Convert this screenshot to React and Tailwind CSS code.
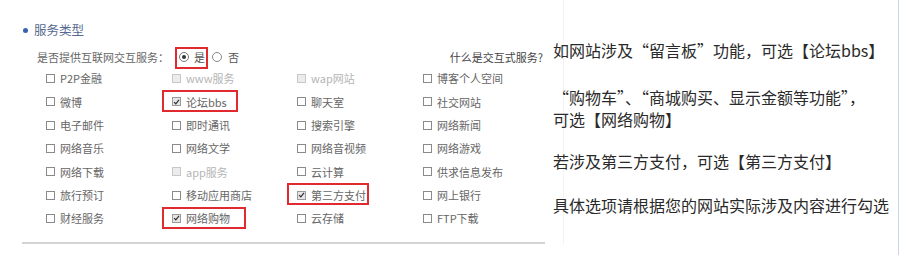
import React from "react";

const rows = [
  [{ t: "P2P金融" }, { t: "www服务", off: true }, { t: "wap网站", off: true }, { t: "博客个人空间" }],
  [{ t: "微博" }, { t: "论坛bbs", on: true, box: "w-[76px]" }, { t: "聊天室" }, { t: "社交网站" }],
  [{ t: "电子邮件" }, { t: "即时通讯" }, { t: "搜索引擎" }, { t: "网络新闻" }],
  [{ t: "网络音乐" }, { t: "网络文学" }, { t: "网络音视频" }, { t: "网络游戏" }],
  [{ t: "网络下载" }, { t: "app服务", off: true }, { t: "云计算" }, { t: "供求信息发布" }],
  [{ t: "旅行预订" }, { t: "移动应用商店" }, { t: "第三方支付", on: true, box: "w-[82px]" }, { t: "网上银行" }],
  [{ t: "财经服务" }, { t: "网络购物", on: true, box: "w-[84px]" }, { t: "云存储" }, { t: "FTP下载" }],
];

const Check = ({ on, off }) => (
  <span
    className={`flex items-center justify-center w-[9px] h-[9px] border ${
      off ? "border-[#c8c8c8] bg-[#ececec]" : on ? "border-[#9a9a9a] bg-[#e6e6e6]" : "border-[#8a8a8a] bg-white"
    }`}
  >
    {on && (
      <svg viewBox="0 0 10 10" className="w-[8px] h-[8px]">
        <path d="M1.5 5.2 L4 7.6 L8.6 2" fill="none" stroke="#333" strokeWidth="1.8" />
      </svg>
    )}
  </span>
);

const Item = ({ t, on, off, box }) => (
  <div className="relative flex items-center gap-[5px]">
    {box && <span className={`absolute left-[-10px] top-[0px] h-[22px] border-2 border-[#e02a2f] ${box}`} />}
    <Check on={on} off={off} />
    <span className={off ? "text-[#b5b5b5]" : "text-[#666]"}>{t}</span>
  </div>
);

export default function App() {
  return (
    <div
      className="w-[901px] h-[255px] bg-white flex"
      style={{ fontFamily: '"Microsoft YaHei", "Noto Sans CJK SC", sans-serif' }}
    >
      {/* form side */}
      <div className="w-[545px] pl-[22px] pt-[22px] flex flex-col">
        <div className="h-[16px] flex items-center gap-[6px] pl-[1px]">
          <span className="w-[5px] h-[5px] rounded-full bg-[#3a62b0]" />
          <span className="text-[12.5px] text-[#56698f]">服务类型</span>
        </div>

        <div className="h-[20px] mt-[9px] flex items-center pl-[15px] text-[11px] text-[#666]">
          <span className="w-[138px]">是否提供互联网交互服务：</span>
          <div className="relative flex items-center gap-[5px] pl-[4px] w-[37px]">
            <span className="absolute left-0 top-[-2px] w-[33px] h-[22px] border-2 border-[#e02a2f]" />
            <span className="flex items-center justify-center w-[10px] h-[10px] rounded-full border border-[#777]">
              <span className="w-[4px] h-[4px] rounded-full bg-[#333]" />
            </span>
            <span className="text-[#555]">是</span>
          </div>
          <div className="flex items-center gap-[6px]">
            <span className="w-[10px] h-[10px] rounded-full border border-[#888]" />
            <span className="text-[#555]">否</span>
          </div>
          <span className="ml-auto pr-[2px] text-[#444]">什么是交互式服务?</span>
        </div>

        <div className="grid grid-cols-[126px_125px_126px_1fr] auto-rows-[23.3px] pl-[24px] text-[11px]">
          {rows.flat().map((it, i) => (
            <Item key={i} {...it} />
          ))}
        </div>

        <div className="mt-[12px] h-[2px] bg-[#d4d4d4]" />
      </div>

      {/* notes side */}
      <div className="relative flex-1 mr-[2px] border-r border-[#cbd6e4] pl-[8px] pt-[39px] text-[16px] leading-[22px] text-[#2a2a2a] whitespace-nowrap">
        <span className="absolute left-[18px] top-0 h-[245px] w-px bg-[#f3f3f3]" />
        <p className="relative">如网站涉及“留言板”功能，可选【论坛bbs】</p>
        <p className="relative mt-[25px]">“购物车”、“商城购买、显示金额等功能”，</p>
        <p className="relative">可选【网络购物】</p>
        <p className="relative mt-[20px]">若涉及第三方支付，可选【第三方支付】</p>
        <p className="relative mt-[22px]">具体选项请根据您的网站实际涉及内容进行勾选</p>
      </div>
    </div>
  );
}
